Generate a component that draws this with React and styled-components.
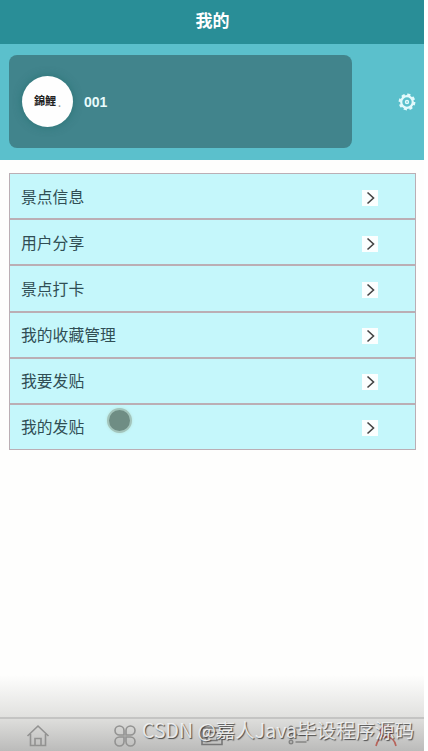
import styled, { createGlobalStyle } from "styled-components"

const GlobalStyle = createGlobalStyle`
    * {
        box-sizing: border-box;
    }

    body {
        margin: 0;
        background: #fff;
        font-family: "Liberation Sans", "Noto Sans CJK SC", sans-serif;
    }
`

const Page = styled.div`
    position: relative;
    display: flex;
    flex-direction: column;
    width: 424px;
    height: 751px;
    overflow: hidden;
    background: #fefefd;
`

const Header = styled.header`
    display: flex;
    align-items: center;
    justify-content: center;
    height: 44px;
    padding: 0 0 5px 1px;
    background: #298e97;
    color: #fff;
    font-size: 17px;
    font-weight: 700;
`

const Profile = styled.section`
    display: flex;
    align-items: center;
    justify-content: space-between;
    height: 116px;
    padding: 0 8px 1px 9px;
    background: #5bc0cc;
`

const UserCard = styled.div`
    display: flex;
    align-items: center;
    gap: 11px;
    width: 343px;
    height: 93px;
    padding-left: 13px;
    border-radius: 8px;
    background: #41848c;
`

const Avatar = styled.div`
    display: flex;
    align-items: center;
    justify-content: center;
    width: 51px;
    height: 51px;
    padding-bottom: 4px;
    border-radius: 50%;
    background: #fefefe;
    box-shadow: 0 0 8px rgba(20, 100, 95, 0.5);
    color: #222;
    font-family: "Noto Sans CJK TC", sans-serif;
    font-size: 11px;
    font-weight: 700;
`

const AvatarDot = styled.small`
    align-self: flex-end;
    padding-bottom: 13px;
    margin-left: 2px;
    color: #999;
    font-size: 9px;
`

const UserName = styled.span`
    color: #e8fbfc;
    font-size: 14px;
    font-weight: 700;
`

const Menu = styled.nav`
    display: flex;
    flex-direction: column;
    margin: 13px 8px 0 9px;
    height: 277px;
`

const MenuItem = styled.div`
    display: flex;
    flex: 1;
    align-items: center;
    justify-content: space-between;
    padding: 0 37px 0 11px;
    border: 1px solid #bbaeb4;
    background: #c5f7fb;
    color: #304e54;
    font-size: 15.8px;
    line-height: 20px;
`

const Label = styled.span`
    padding-top: 3px;
`

const Arrow = styled.span`
    display: flex;
    width: 16px;
    height: 16px;
    margin-top: 3px;
    background: #fbfefe;
`

const TabBar = styled.footer`
    display: flex;
    flex-direction: column;
    justify-content: flex-end;
    height: 76px;
    margin-top: auto;
    background: linear-gradient(#fefefd, #e2e2e0 40px, #bbbbba);
`

const Tabs = styled.div`
    display: grid;
    grid-template-columns: repeat(5, 87.2px);
    justify-content: center;
    justify-items: center;
    height: 34px;
    padding-top: 5px;
    border-top: 2px solid #c4c4c3;
`

const TabIcon = styled.svg`
    width: 24px;
    height: 24px;
    fill: none;
    stroke: ${(props) => props.$color || "#929291"};
    stroke-width: 1.6;
`

const TouchDot = styled.div`
    position: absolute;
    left: 107px;
    top: 408px;
    width: 25px;
    height: 25px;
    border: 2px solid #a3c4bb;
    border-radius: 50%;
    background: #6f8d84;
    box-shadow: 0 0 3px #b9e3d9;
`

const Watermark = styled.div`
    position: absolute;
    left: 142px;
    top: 716px;
    color: rgba(245, 245, 245, 0.88);
    font-family: "Noto Sans CJK SC", sans-serif;
    font-size: 19.5px;
    line-height: 28px;
    white-space: nowrap;
    text-shadow: 1px 1px 1px rgba(50, 50, 50, 0.85);
`

const links = ["景点信息", "用户分享", "景点打卡", "我的收藏管理", "我要发贴", "我的发贴"]

const Gear = () => (
    <svg width="18" height="18" viewBox="0 0 18 18" fill="none" stroke="#e4fafc">
        <circle cx="9" cy="9" r="5.8" strokeWidth="2.2" />
        <circle cx="9" cy="9" r="7.3" strokeWidth="2.2" strokeDasharray="3.2 2.533" />
        <circle cx="9" cy="9" r="1.5" strokeWidth="1.4" />
    </svg>
)

const Chevron = () => (
    <svg width="16" height="16" viewBox="0 0 16 16" fill="none" stroke="#444" strokeWidth="1.6">
        <path d="M5.5 2.5 11.5 8l-6 5.5" />
    </svg>
)

const App = () => (
    <>
        <GlobalStyle />
        <Page>
            <Header>我的</Header>
            <Profile>
                <UserCard>
                    <Avatar>
                        錦鯉
                        <AvatarDot>.</AvatarDot>
                    </Avatar>
                    <UserName>001</UserName>
                </UserCard>
                <Gear />
            </Profile>
            <Menu>
                {links.map((label) => (
                    <MenuItem key={label}>
                        <Label>{label}</Label>
                        <Arrow>
                            <Chevron />
                        </Arrow>
                    </MenuItem>
                ))}
            </Menu>
            <TabBar>
                <Tabs>
                    <TabIcon viewBox="0 0 24 24">
                        <path d="M1.5 12 12 2l10.500 10M4.500 10v11.500h15V10M9 21.500v-7h6v7" />
                    </TabIcon>
                    <TabIcon viewBox="0 0 24 24">
                        <path d="M11 11H6.500A4.500 4.500 0 1 1 11 6.500zM13 11V6.500a4.500 4.500 0 1 1 4.500 4.500zM11 13v4.500A4.500 4.500 0 1 1 6.500 13zM13 13h4.500a4.500 4.500 0 1 1-4.500 4.500z" />
                    </TabIcon>
                    <TabIcon viewBox="0 0 24 24" $color="#777">
                        <path d="M2 4h20v16.500H2zM2 14h5v2.500h10V14h5M7 8.500h10" />
                    </TabIcon>
                    <TabIcon viewBox="0 0 24 24" $color="#858584">
                        <circle cx="4" cy="4" r="1.700" />
                        <circle cx="4" cy="11" r="1.700" />
                        <circle cx="4" cy="18" r="1.700" />
                        <path d="M8.500 4h11M8.500 11h11M8.500 18h11" />
                    </TabIcon>
                    <TabIcon viewBox="0 0 24 24" $color="#b8645b">
                        <circle cx="12" cy="7.500" r="5.500" />
                        <path d="M2 22c1-5 4-9 10-9s9 4 10 9" />
                    </TabIcon>
                </Tabs>
            </TabBar>
            <TouchDot />
            <Watermark>CSDN @嘉人Java毕设程序源码</Watermark>
        </Page>
    </>
)

export default App
